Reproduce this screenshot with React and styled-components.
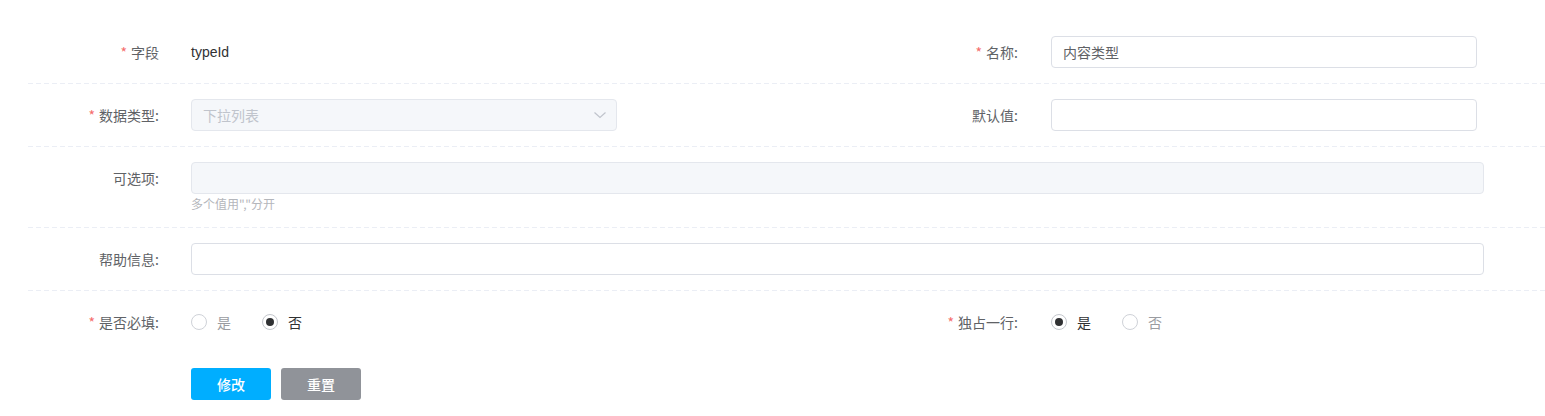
import React from "react";
import styled, { createGlobalStyle } from "styled-components";

const Global = createGlobalStyle`
  html, body { margin: 0; padding: 0; background: #fff; }
  body { font-family: "Noto Sans CJK SC", "Noto Sans", "Liberation Sans", sans-serif; font-size: 14px; color: #606266; }
  * { box-sizing: border-box; }
`;

const Form = styled.form`
  padding: 21px 0 16px 28px;
  width: 1545px;
`;

const Row = styled.div`
  display: flex;
  justify-content: ${(p) => (p.$split ? "space-between" : "flex-start")};
  align-items: flex-start;
  padding: 15px ${(p) => (p.$split ? "68px" : "0")} ${(p) => (p.$last ? "15px" : "16px")} 0;
  background: ${(p) =>
    p.$last
      ? "none"
      : "repeating-linear-gradient(to right, #ebeef5 0 5px, transparent 5px 8px) left bottom / 100% 1px no-repeat"};
`;

const Item = styled.div`
  display: flex;
  align-items: flex-start;
`;

const Label = styled.label`
  width: 163px;
  flex: none;
  padding-right: ${(p) => (p.$pr ? p.$pr : 32)}px;
  text-align: right;
  line-height: 32px;
  height: 32px;
  font-size: 14px;
  color: #606266;
  white-space: nowrap;
`;

const Star = styled.span`
  color: #f56c6c;
  margin-right: 4px;
`;

const Content = styled.div`
  width: ${(p) => p.$w}px;
  display: flex;
  flex-direction: column;
`;

const Value = styled.div`
  line-height: 32px;
  height: 32px;
  color: #303133;
  font-family: "Liberation Sans", "Noto Sans CJK SC", sans-serif;
  font-size: 14px;
`;

const Input = styled.input`
  width: 100%;
  height: 32px;
  border: 1px solid ${(p) => (p.disabled ? "#e4e7ed" : "#dcdfe6")};
  background: ${(p) => (p.disabled ? "#f5f7fa" : "#fff")};
  border-radius: 4px;
  padding: 0 11px;
  font-family: "Noto Sans CJK SC", sans-serif;
  font-size: 14px;
  color: #606266;
  outline: none;
  &::placeholder { color: #c0c4cc; }
`;

const SelectBox = styled.div`
  position: relative;
  width: 100%;
`;

const Arrow = styled.svg`
  position: absolute;
  right: 10px;
  top: 11px;
  width: 14px;
  height: 10px;
`;

const Hint = styled.div`
  margin-top: 2px;
  font-size: 12px;
  line-height: 16px;
  color: #b4b6bb;
`;

const RadioGroup = styled.div`
  display: flex;
  align-items: center;
  height: 32px;
`;

const Radio = styled.label`
  display: flex;
  align-items: center;
  margin-right: 31px;
  font-size: 14px;
  color: ${(p) => (p.$checked ? "#303133" : "#9a9ca1")};
`;

const Circle = styled.span`
  flex: none;
  width: 16px;
  height: 16px;
  border-radius: 50%;
  border: 1px solid ${(p) => (p.$checked ? "#c4c7cd" : "#cfd2d8")};
  display: inline-flex;
  align-items: center;
  justify-content: center;
  margin-right: 10px;
  &::after {
    content: "";
    width: 8px;
    height: 8px;
    border-radius: 50%;
    background: ${(p) => (p.$checked ? "#303133" : "transparent")};
  }
`;

const Actions = styled.div`
  display: flex;
  gap: 10px;
  padding: 15px 0 0 163px;
`;

const Button = styled.button`
  width: 80px;
  height: 32px;
  border: none;
  border-radius: 3px;
  background: ${(p) => (p.$gray ? "#909399" : "#00aeff")};
  color: #fff;
  font-family: "Noto Sans CJK SC", sans-serif;
  font-size: 14px;
  font-weight: 500;
  cursor: pointer;
`;

function RadioOpt({ checked, children }) {
  return (
    <Radio $checked={checked}>
      <Circle $checked={checked} />
      {children}
    </Radio>
  );
}

export default function App() {
  return (
    <>
      <Global />
      <Form onSubmit={(e) => e.preventDefault()}>
        <Row $split>
          <Item>
            <Label><Star>*</Star>字段</Label>
            <Content $w={426}><Value>typeId</Value></Content>
          </Item>
          <Item>
            <Label $pr={33}><Star>*</Star>名称:</Label>
            <Content $w={426}><Input defaultValue="内容类型" /></Content>
          </Item>
        </Row>
        <Row $split>
          <Item>
            <Label><Star>*</Star>数据类型:</Label>
            <Content $w={426}>
              <SelectBox>
                <Input disabled placeholder="下拉列表" />
                <Arrow viewBox="0 0 14 10">
                  <path d="M1.5 2.5 L7 7.5 L12.5 2.5" fill="none" stroke="#c0c4cc" strokeWidth="1.2" />
                </Arrow>
              </SelectBox>
            </Content>
          </Item>
          <Item>
            <Label $pr={33}>默认值:</Label>
            <Content $w={426}><Input /></Content>
          </Item>
        </Row>
        <Row>
          <Item>
            <Label>可选项:</Label>
            <Content $w={1293}>
              <Input disabled />
              <Hint>多个值用","分开</Hint>
            </Content>
          </Item>
        </Row>
        <Row>
          <Item>
            <Label>帮助信息:</Label>
            <Content $w={1293}><Input /></Content>
          </Item>
        </Row>
        <Row $split $last>
          <Item>
            <Label><Star>*</Star>是否必填:</Label>
            <Content $w={426}>
              <RadioGroup>
                <RadioOpt>是</RadioOpt>
                <RadioOpt checked>否</RadioOpt>
              </RadioGroup>
            </Content>
          </Item>
          <Item>
            <Label $pr={33}><Star>*</Star>独占一行:</Label>
            <Content $w={426}>
              <RadioGroup>
                <RadioOpt checked>是</RadioOpt>
                <RadioOpt>否</RadioOpt>
              </RadioGroup>
            </Content>
          </Item>
        </Row>
        <Actions>
          <Button type="button">修改</Button>
          <Button type="button" $gray>重置</Button>
        </Actions>
      </Form>
    </>
  );
}
